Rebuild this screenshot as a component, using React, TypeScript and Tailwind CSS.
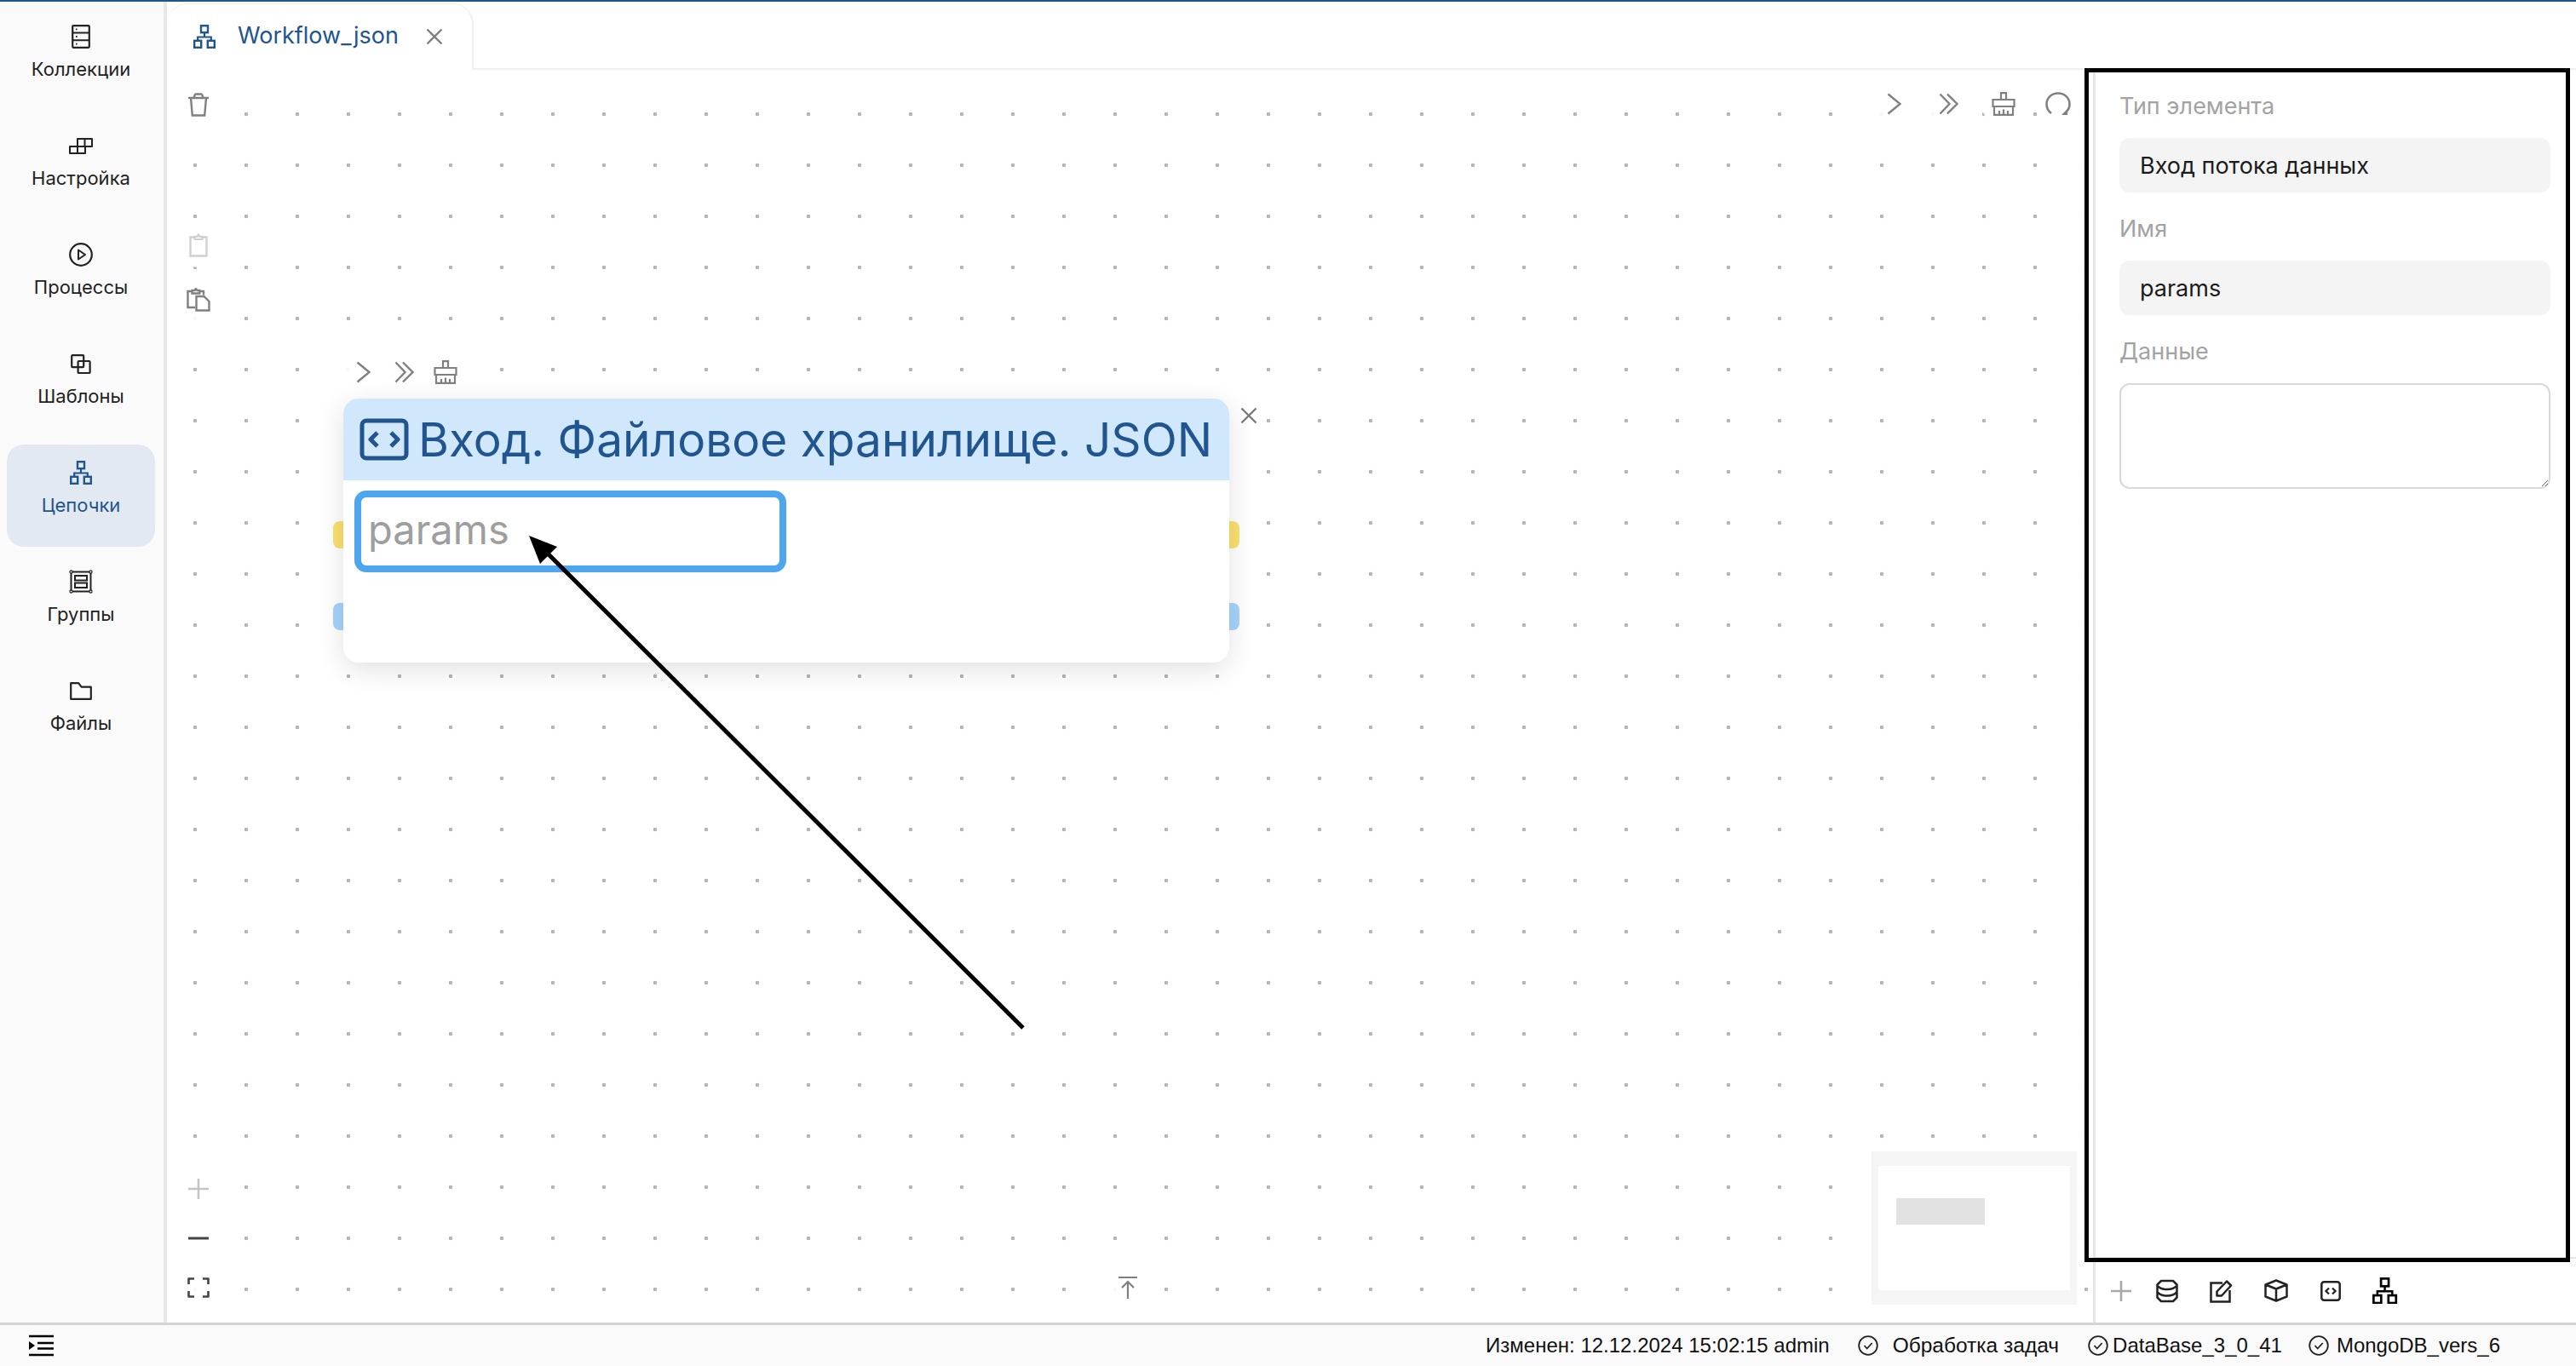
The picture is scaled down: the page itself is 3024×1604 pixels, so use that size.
import React from "react";

type P = { className?: string };
const S = ({ className, w, h, children }: P & { w: number; h: number; children: React.ReactNode }) => (
  <svg viewBox={`0 0 ${w} ${h}`} width={w} height={h} fill="none" stroke="currentColor" className={className}>
    {children}
  </svg>
);

const Collections = () => (
  <S w={22} h={28} className="text-[#222]">
    <rect x="1.2" y="1.2" width="19.6" height="25.6" rx="1" strokeWidth="2.2" />
    <path d="M1 9.6h20M1 18.2h20" strokeWidth="2" />
    <path d="M5 5.4h1.6M5 14h1.6M5 22.6h1.6" strokeWidth="1.8" />
  </S>
);
const Settings = () => (
  <S w={28} h={19} className="text-[#222]">
    <path d="M1 10h18v8H1zM10 1h17v9H10zM10 10v8M18.500 1v9" strokeWidth="2" strokeLinejoin="round" />
  </S>
);
const Play = () => (
  <S w={28} h={28} className="text-[#222]">
    <circle cx="14" cy="14" r="12.8" strokeWidth="2.2" />
    <path d="M11 8.5v11l8-5.5z" strokeWidth="2" strokeLinejoin="round" />
  </S>
);
const Templates = () => (
  <S w={24} h={23} className="text-[#222]">
    <rect x="1.2" y="1.2" width="14" height="14" rx="1" strokeWidth="2.2" />
    <rect x="8.6" y="8" width="14" height="14" rx="1" strokeWidth="2.2" />
  </S>
);
const Sitemap = ({ size = 1, className = "" }: P & { size?: number }) => (
  <svg viewBox="0 0 26 28" width={26 * size} height={28 * size} fill="none" stroke="currentColor" className={className}>
    <rect x="9" y="1.2" width="8" height="8" strokeWidth="2.4" />
    <rect x="1.2" y="18.8" width="8" height="8" strokeWidth="2.4" />
    <rect x="16.8" y="18.8" width="8" height="8" strokeWidth="2.4" />
    <path d="M13 9.5v5M5.2 19v-4.5h15.6V19" strokeWidth="2.2" />
  </svg>
);
const Groups = () => (
  <S w={28} h={28} className="text-[#222]">
    <rect x="2.5" y="2.5" width="23" height="23" strokeWidth="2" />
    <rect x="7" y="7" width="14" height="5.5" strokeWidth="2" />
    <rect x="7" y="15.5" width="14" height="5.5" strokeWidth="2" />
    <g fill="#fafafa" strokeWidth="1.2">
      <circle cx="2.5" cy="2.5" r="1.6" />
      <circle cx="25.5" cy="2.5" r="1.6" />
      <circle cx="2.5" cy="25.5" r="1.6" />
      <circle cx="25.5" cy="25.5" r="1.6" />
    </g>
  </S>
);
const Folder = () => (
  <S w={26} h={21} className="text-[#222]">
    <path d="M1.2 19.8V1.2h9l3.4 4.4h11.2v14.2z" strokeWidth="2.2" strokeLinejoin="round" />
  </S>
);

const Chevron = () => (
  <S w={18} h={26} className="text-[#808080]">
    <path d="M1.500 1.500L15.500 13 1.500 24.500" strokeWidth="2.400" />
  </S>
);
const Chevrons = () => (
  <S w={24} h={26} className="text-[#808080]">
    <path d="M1.500 1.500L12.500 13 1.500 24.500M10 1.500L21.500 13 10 24.500" strokeWidth="2.400" />
  </S>
);
const Broom = () => (
  <S w={28} h={28} className="text-[#808080]">
    <path
      d="M11 9V1.200h6V9M1.500 9h25v8h-25zM3 17v9.800h22V17M9 26.500v-4.500M14 26.500v-6M19 26.500v-4.500"
      strokeWidth="2.200"
    />
  </S>
);
const Refresh = () => (
  <S w={30} h={28} className="text-[#808080]">
    <path d="M7 25C3.700 22.600 1.500 18.600 1.500 14.300 1.500 7 7.400 1.500 15 1.500s13.500 5.500 13.500 12.800c0 4.200-2 7.800-5 10.200" strokeWidth="2.600" />
    <path d="M19 27h7v-7z" fill="currentColor" stroke="none" />
  </S>
);
const Trash = () => (
  <S w={26} h={28} className="text-[#808080]">
    <path d="M1 6h24M4 6l1.800 20.500h14.400L22 6M7.500 6l1.200-3.500q.3-1 1.300-1h6q1 0 1.300 1L18.500 6" strokeWidth="2.400" />
  </S>
);
const Clip = () => (
  <S w={22} h={28} className="text-[#d0d0d0]">
    <path d="M6.500 4.500H1.500v22h19v-22h-5" strokeWidth="2.400" />
    <path d="M6.500 7V3.800h3L11 1.500l1.500 2.300h3V7z" strokeWidth="2.200" />
  </S>
);
const Copy = () => (
  <S w={30} h={28} className="text-[#808080]">
    <path d="M11 23H2.500V4h5M16 4h5v4.500" strokeWidth="2.400" />
    <path d="M7.500 6.500V3h3L12 1l1.500 2h2.800v3.500zM12.500 10h9l6 6v10.500h-15z" strokeWidth="2.400" />
  </S>
);
const Plus = ({ className = "" }: P) => (
  <S w={24} h={24} className={className}>
    <path d="M12 0v24M0 12h24" strokeWidth="2.600" />
  </S>
);
const Minus = () => (
  <S w={26} h={6} className="text-[#444]">
    <path d="M1 3h24" strokeWidth="3" />
  </S>
);
const Fit = () => (
  <S w={26} h={24} className="text-[#444]">
    <path d="M8 1.500H1.500V8M18 1.500h6.500V8M8 22.500H1.500V16M18 22.500h6.500V16" strokeWidth="2.600" strokeLinejoin="round" />
  </S>
);
const ToTop = () => (
  <S w={24} h={28} className="text-[#808080]">
    <path d="M1 2h22M12 27V8M5 14l7-7 7 7" strokeWidth="2.200" />
  </S>
);
const Close = ({ className = "" }: P) => (
  <S w={20} h={20} className={className}>
    <path d="M1.500 1.500l17 17M18.500 1.500l-17 17" strokeWidth="2.400" />
  </S>
);
const CodeBox = () => (
  <svg viewBox="0 0 58 50" width={58} height={50} fill="none" stroke="#20558f">
    <rect x="3" y="3" width="52" height="44" rx="5" strokeWidth="5" />
    <path d="M21 17l-8 8 8 8M37 17l8 8-8 8" strokeWidth="5" strokeLinejoin="round" />
  </svg>
);
const Db = () => (
  <S w={26} h={28} className="text-[#222]">
    <path
      d="M1.500 6.500L6 2h14l4.500 4.500v15L20 26H6l-4.500-4.500zM1.500 7.500Q5 12 13 12t11.500-4.500M1.500 15Q5 19.500 13 19.500T24.500 15"
      strokeWidth="2.500"
      strokeLinejoin="round"
    />
  </S>
);
const Edit = () => (
  <S w={28} h={28} className="text-[#222]">
    <path d="M15 4.500H1.500v22h22V13" strokeWidth="2.500" />
    <path d="M8.500 19.500v-5L20 2.500l5 5-11 12z" strokeWidth="2.500" strokeLinejoin="round" />
  </S>
);
const Box = () => (
  <S w={28} h={27} className="text-[#222]">
    <path d="M14 1.500l12.500 5v14l-12.500 5-12.500-5v-14zM1.500 6.500l12.500 5 12.500-5M14 11.500v14" strokeWidth="2.500" strokeLinejoin="round" />
  </S>
);
const CodeSmall = () => (
  <S w={24} h={24} className="text-[#222]">
    <rect x="1.300" y="1.300" width="21.400" height="21.400" rx="3" strokeWidth="2.500" />
    <path d="M10 8.500L6.500 12l3.500 3.500M14 8.500l3.500 3.500-3.500 3.500" strokeWidth="2.200" />
  </S>
);
const Check = () => (
  <S w={24} h={24} className="shrink-0 text-[#222]">
    <circle cx="12" cy="12" r="10.800" strokeWidth="1.800" />
    <path d="M7.500 12l3.200 3.500 6-6.500" strokeWidth="1.800" />
  </S>
);
const Indent = () => (
  <S w={30} h={26} className="text-black">
    <path d="M1 2h29M11 10h19M11 16.500h19M1 24h29" strokeWidth="2.600" />
    <path d="M1 8l7 5-7 5z" fill="currentColor" stroke="none" />
  </S>
);

const nav: { label: string; icon: React.ReactNode; active?: boolean }[] = [
  { label: "Коллекции", icon: <Collections /> },
  { label: "Настройка", icon: <Settings /> },
  { label: "Процессы", icon: <Play /> },
  { label: "Шаблоны", icon: <Templates /> },
  { label: "Цепочки", icon: <Sitemap className="text-[#20558f]" />, active: true },
  { label: "Группы", icon: <Groups /> },
  { label: "Файлы", icon: <Folder /> },
];

const Btn = ({ children }: { children: React.ReactNode }) => (
  <div className="flex h-[52px] w-[52px] items-center justify-center rounded-full bg-white/90">{children}</div>
);

const Slot = ({ children }: { children: React.ReactNode }) => (
  <div className="flex w-[64px] items-center justify-center">{children}</div>
);

const Label = ({ children }: { children: React.ReactNode }) => (
  <div className="flex h-[36px] items-center pt-[2px] text-[27px] text-[#a3a3a3]">{children}</div>
);
const Field = ({ children }: { children: React.ReactNode }) => (
  <div className="flex h-[64px] items-center rounded-[12px] bg-[#f4f4f4] pt-[2px] pl-[24px] text-[27px] text-[#1c1c1c]">{children}</div>
);

export default function App() {
  return (
    <div className="flex h-[1604px] w-[3024px] flex-col overflow-hidden bg-white font-['Inter','Noto_Sans',sans-serif]">
      <div className="h-[2px] shrink-0 bg-[#20558f]" />
      <div className="flex min-h-0 flex-1">
        <nav className="flex w-[196px] shrink-0 flex-col gap-[8px] border-r-[4px] border-[#e8e8e8] bg-[#fafafa] pt-[8px] pl-[8px] pr-[10px]">
          {nav.map((n) => (
            <div
              key={n.label}
              className={
                n.active
                  ? "flex h-[120px] flex-col items-center rounded-[20px] bg-[#e3e9f1] text-[#20558f]"
                  : "flex h-[120px] flex-col items-center rounded-[20px] text-[#222]"
              }
            >
              <div className="flex h-[62px] shrink-0 items-center justify-center pt-[4px]">{n.icon}</div>
              <div className="mt-[-7px] text-[22px] leading-[32px]">{n.label}</div>
            </div>
          ))}
        </nav>
        <div className="flex min-w-0 flex-1 flex-col">
          <div className="flex h-[80px] shrink-0">
            <div className="mt-[2px] flex w-[360px] shrink-0 items-center rounded-t-[24px] border-r-2 border-t border-[#f0f0f0] pb-[2px] pl-[31px]">
              <Sitemap className="text-[#20558f]" />
              <span className="ml-[26px] text-[27px] text-[#20558f]">Workflow_json</span>
              <div className="ml-[32px]">
                <Close className="text-[#808080]" />
              </div>
            </div>
            <div className="flex-1 border-b-2 border-[#f0f0f0]" />
          </div>
          <div className="flex min-h-0 flex-1">
            <div className="relative min-w-0 flex-1 bg-[radial-gradient(circle_at_center,#b4b4b8_2px,transparent_2.6px)] bg-[length:60px_60px] bg-[position:3px_22px]">
              <div className="absolute top-[15px] left-[11px]">
                <Btn>
                  <Trash />
                </Btn>
              </div>
              <div className="absolute top-[180px] left-[11px] flex flex-col gap-[12px]">
                <Btn>
                  <Clip />
                </Btn>
                <Btn>
                  <Copy />
                </Btn>
              </div>
              <div className="absolute top-[14px] right-[15px] flex gap-[12px]">
                <Btn>
                  <Chevron />
                </Btn>
                <Btn>
                  <Chevrons />
                </Btn>
                <Btn>
                  <Broom />
                </Btn>
                <Btn>
                  <Refresh />
                </Btn>
              </div>
              <div className="absolute top-[1288px] left-[11px] flex flex-col gap-[6px]">
                <Btn>
                  <Plus className="text-[#c4c4c4]" />
                </Btn>
                <Btn>
                  <Minus />
                </Btn>
                <Btn>
                  <Fit />
                </Btn>
              </div>
              <div className="absolute top-[1404px] left-[1102px]">
                <Btn>
                  <ToTop />
                </Btn>
              </div>

              <div className="absolute top-[329px] left-[205px] flex">
                <div className="-mr-[4px]">
                  <Btn>
                    <Chevron />
                  </Btn>
                </div>
                <div className="-mr-[4px]">
                  <Btn>
                    <Chevrons />
                  </Btn>
                </div>
                <Btn>
                  <Broom />
                </Btn>
              </div>

              {/* node */}
              <div className="absolute top-[386px] left-[195px] h-[310px] w-[1064px]">
                <div className="absolute top-[144px] left-0 h-[32px] w-[20px] rounded-l-[8px] bg-[#fbe06f]" />
                <div className="absolute top-[240px] left-0 h-[32px] w-[20px] rounded-l-[8px] bg-[#a6d3fc]" />
                <div className="absolute top-[144px] right-0 h-[32px] w-[20px] rounded-r-[8px] bg-[#fbe06f]" />
                <div className="absolute top-[240px] right-0 h-[32px] w-[20px] rounded-r-[8px] bg-[#a6d3fc]" />
                <div className="absolute top-0 left-[12px] flex h-[310px] w-[1040px] flex-col overflow-hidden rounded-[18px] bg-white shadow-[0_8px_32px_rgba(0,0,0,0.12)]">
                  <div className="flex h-[96px] shrink-0 items-center bg-[#d1e7fc] pl-[19px] text-[55px] text-[#20558f]">
                    <CodeBox />
                    <span className="ml-[11px] whitespace-nowrap">Вход. Файловое хранилище. JSON</span>
                  </div>
                  <div className="pt-[12px] pl-[13px]">
                    <div className="flex h-[96px] w-[507px] items-center rounded-[14px] border-[8px] border-[#4da6ee] pl-[8px] pb-[4px] text-[47px] text-[#9e9e9e]">
                      params
                    </div>
                  </div>
                </div>
              </div>
              <div className="absolute top-[396px] left-[1260px]">
                <Close className="text-[#7a7a7a]" />
              </div>

              {/* minimap */}
              <div className="absolute right-[19px] bottom-[21px] h-[180px] w-[241px] bg-[#f5f5f5] px-[8px] pt-[17px]">
                <div className="relative h-[146px] w-[225px] bg-white">
                  <div className="absolute top-[38px] left-[21px] h-[31px] w-[104px] bg-[#e2e2e2]" />
                </div>
              </div>
            </div>

            <aside className="flex w-[567px] shrink-0 flex-col border-l-[3px] border-[#e6e6e6]">
              <div className="flex flex-1 flex-col border-b-2 border-[#e6e6e6] pt-[24px] pr-[30px] pl-[28px]">
                <Label>Тип элемента</Label>
                <div className="mt-[20px]">
                  <Field>Вход потока данных</Field>
                </div>
                <div className="mt-[24px]">
                  <Label>Имя</Label>
                </div>
                <div className="mt-[20px]">
                  <Field>params</Field>
                </div>
                <div className="mt-[24px]">
                  <Label>Данные</Label>
                </div>
                <textarea
                  readOnly
                  className="mt-[20px] h-[124px] w-full rounded-[12px] border-2 border-[#d9d9d9] bg-white outline-none"
                />
              </div>
              <div className="flex h-[75px] shrink-0 items-stretch pl-[18px]">
                <div className="flex items-center">
                  <Plus className="text-[#a8a8a8]" />
                </div>
                <div className="ml-[10px] flex">
                  <Slot>
                    <Db />
                  </Slot>
                  <Slot>
                    <Edit />
                  </Slot>
                  <Slot>
                    <Box />
                  </Slot>
                  <Slot>
                    <CodeSmall />
                  </Slot>
                  <Slot>
                    <Sitemap size={1.12} />
                  </Slot>
                </div>
              </div>
            </aside>
          </div>
        </div>
      </div>
      <footer className="flex h-[51px] shrink-0 items-center border-t-[3px] border-[#d4d4d4] bg-[#fafafa] pr-[89px] pl-[33px] font-['Liberation_Sans',sans-serif] text-[24px] text-[#111]">
        <Indent />
        <span className="ml-auto">Изменен: 12.12.2024 15:02:15 admin</span>
        <span className="ml-[33px] flex items-center gap-[17px] text-[24.5px]">
          <Check />
          Обработка задач
        </span>
        <span className="ml-[34px] flex items-center gap-[5px]">
          <Check />
          DataBase_3_0_41
        </span>
        <span className="ml-[31px] flex items-center gap-[9px]">
          <Check />
          MongoDB_vers_6
        </span>
      </footer>

      {/* annotation overlay */}
      <div className="pointer-events-none absolute top-[80px] left-[2447px] h-[1402px] w-[570px] border-[5px] border-black" />
      <svg className="pointer-events-none absolute top-0 left-0" width={3024} height={1604} fill="none">
        <path d="M1201 1207L634 641" stroke="#000" strokeWidth="5" />
        <path d="M621 629L654 642L634 662Z" fill="#000" stroke="none" />
      </svg>
    </div>
  );
}
